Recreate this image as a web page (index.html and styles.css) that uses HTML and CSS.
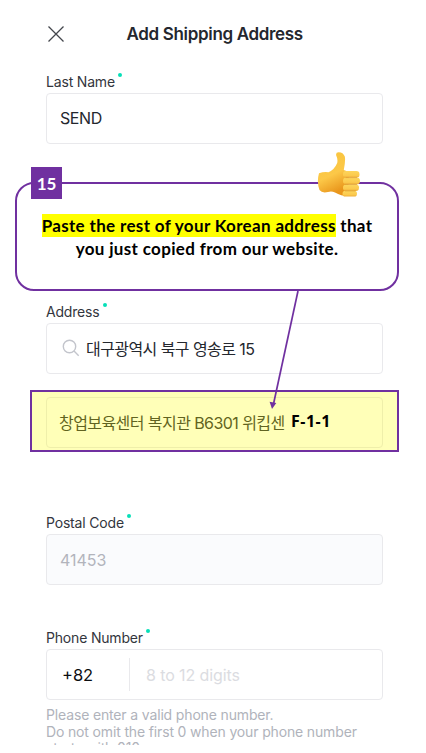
FILE: index.html
```
<!DOCTYPE html>
<html lang="en">
<head>
    <title>Add Shipping Address</title>
    <meta charset="utf-8">
    <meta name="viewport" content="width=device-width, initial-scale=1.0">
    <link rel="stylesheet" href="styles.css">
</head>
<body>
    <div class="screen">
        <div class="header">
            <svg class="close" width="18" height="18" viewBox="0 0 18 18">
                <path d="M1.5 1.5L16.5 16.5M16.5 1.5L1.5 16.5"/>
            </svg>
            <h1>Add Shipping Address</h1>
        </div>

        <div class="field name-field">
            <div class="label">Last Name<i class="dot"></i></div>
            <div class="input name">SEND</div>
        </div>

        <div class="field address-field">
            <div class="label">Address<i class="dot"></i></div>
            <div class="input search">
                <svg width="18" height="18" viewBox="0 0 18 18">
                    <circle cx="7.5" cy="7.5" r="6.2"/>
                    <path d="M12 12L16.7 16.7"/>
                </svg>
                <span class="korean">대구광역시 북구 영송로 15</span>
            </div>
            <div class="input detail">
                <span class="korean">창업보육센터 복지관 B6301 위킵센</span>
            </div>
        </div>

        <div class="field postal-field">
            <div class="label">Postal Code<i class="dot"></i></div>
            <div class="input disabled">41453</div>
        </div>

        <div class="field phone-field">
            <div class="label">Phone Number<i class="dot"></i></div>
            <div class="input phone">
                <span class="prefix">+82</span>
                <span class="placeholder">8 to 12 digits</span>
            </div>
            <p class="hint">Please enter a valid phone number.<br>Do not omit the first 0 when your phone number<br>starts with 010.</p>
        </div>
    </div>

    <!-- tutorial overlay -->
    <div class="callout">
        <p><mark>Paste the rest of your Korean address</mark> that</p>
        <p>you just copied from our website.</p>
    </div>
    <div class="step">15</div>
    <div class="highlight"></div>
    <div class="unit">F-1-1</div>
    <svg class="arrow" width="40" height="122" viewBox="0 0 40 122">
        <path class="line" d="M33 1L8.5 114"/>
        <path class="tip" d="M4.6 111.8L11.3 113L7 119Z"/>
    </svg>
    <svg class="thumb" width="44" height="48" viewBox="0 0 44 48">
        <defs>
            <linearGradient id="skin" x1="0" y1="0" x2="0.35" y2="1">
                <stop offset="0" stop-color="#f8c43c"/>
                <stop offset="0.6" stop-color="#fcc848"/>
                <stop offset="1" stop-color="#e9961c"/>
            </linearGradient>
            <linearGradient id="finger" x1="0" y1="0" x2="0" y2="1">
                <stop offset="0" stop-color="#fdd65c"/>
                <stop offset="0.7" stop-color="#fbc94d"/>
                <stop offset="1" stop-color="#eeac36"/>
            </linearGradient>
        </defs>
        <path fill="url(#skin)" d="M2 22.300Q7 20.500 11.500 21.300Q17.500 18.500 20.200 12Q21 8 19.200 4.500Q18.600 1.300 21.500 1.200Q26 1 27.800 5.500Q28.700 9 26.800 19L32 21L31 45Q24 45 18 41.500Q14.500 39.800 11 41Q5 42.500 2.500 39Q-.5 31 2 22.300Z"/>
        <rect fill="url(#finger)" x="26" y="20" width="16.500" height="6.600" rx="3.200"/>
        <rect fill="url(#finger)" x="26" y="26.600" width="17" height="6.800" rx="3.400"/>
        <rect fill="url(#finger)" x="26" y="33.400" width="16" height="6.500" rx="3.200"/>
        <rect fill="url(#finger)" x="25.500" y="39.800" width="14.500" height="5.800" rx="2.900"/>
        <path class="crease" d="M28.500 26.600H40M28 33.400H40M28 39.900H38.500"/>
    </svg>
</body>
</html>
```

FILE: styles.css
```
* {
    box-sizing: border-box;
}
body {
    position: relative;
    margin: 0;
    height: 753px;
    overflow: hidden;
    background: white;
    font-family: Inter, 'Noto Sans CJK KR', sans-serif;
    color: #24272e;
}
.screen {
    height: 745px;
    padding: 0 43px 0 46px;
    overflow: hidden;
}
.header {
    display: flex;
    align-items: center;
    height: 68px;
    padding-left: 1px;
}
.header h1 {
    margin: 0 0 0 61.500px;
    font-size: 17px;
    font-weight: 600;
    letter-spacing: -0.33px;
    white-space: nowrap;
}
.close {
    stroke: #43464c;
    stroke-width: 1.3;
    fill: none;
}
.name-field {
    margin-top: 3px;
}
.address-field {
    margin-top: 157px;
}
.postal-field {
    margin-top: 64px;
}
.phone-field {
    margin-top: 42px;
}
.label {
    display: flex;
    height: 22px;
    line-height: 21px;
    font-size: 14px;
    letter-spacing: -0.18px;
    color: #33363d;
}
.dot {
    width: 4px;
    height: 4px;
    margin: 2px 0 0 3px;
    border-radius: 50%;
    background: #06dfb8;
}
.input {
    display: flex;
    align-items: center;
    height: 51px;
    padding-left: 13px;
    border: 1px solid #e9e9ec;
    border-radius: 4px;
    font-size: 16px;
    white-space: nowrap;
}
.name {
    padding-bottom: 2px;
    letter-spacing: -0.4px;
}
.search {
    padding-bottom: 2px;
}
.search svg {
    margin: 0 6px 0 2px;
    fill: none;
    stroke: #c3c5cc;
    stroke-width: 1.4;
}
.korean {
    letter-spacing: -0.57px;
}
.detail {
    margin-top: 23px;
    padding-left: 12px;
    padding-bottom: 2px;
}
.disabled {
    background: #fafbfd;
    color: #b2b4bc;
}
.phone {
    padding-left: 15px;
}
.prefix {
    width: 68px;
    height: 33px;
    line-height: 35px;
    border-right: 1px solid #e9e9ec;
    font-size: 16.500px;
    color: #0c0d10;
}
.placeholder {
    margin-left: 16px;
    letter-spacing: -0.1px;
    color: #dbdce1;
}
.hint {
    margin: 7px 0 0;
    font-size: 14px;
    line-height: 16.500px;
    letter-spacing: -0.15px;
    color: #b0b3bb;
    white-space: nowrap;
}
.callout {
    position: absolute;
    left: 15px;
    top: 182px;
    width: 384px;
    height: 109px;
    padding-top: 30px;
    border: 2px solid #7030a0;
    border-radius: 19px;
    background: white;
    font-family: Lato, sans-serif;
    font-size: 17px;
    font-weight: 700;
    line-height: 23px;
    letter-spacing: 0.34px;
    text-align: center;
    color: black;
    white-space: nowrap;
}
.callout p {
    margin: 0;
}
.callout mark {
    display: inline-block;
    background: #ffff00;
    color: black;
}
.step {
    position: absolute;
    left: 31px;
    top: 167px;
    width: 31px;
    height: 32px;
    background: #7030a0;
    color: white;
    font-family: Lato, sans-serif;
    font-size: 17px;
    font-weight: 700;
    line-height: 34px;
    text-align: center;
}
.highlight {
    position: absolute;
    left: 30px;
    top: 390px;
    width: 369px;
    height: 62px;
    border: 2px solid #7030a0;
    background: rgba(255, 255, 0, 0.28);
}
.unit {
    position: absolute;
    left: 291px;
    top: 410px;
    font-family: 'Noto Sans', sans-serif;
    font-size: 16px;
    font-weight: 700;
    line-height: 22px;
    letter-spacing: 0.5px;
    color: black;
}
.arrow {
    position: absolute;
    left: 265px;
    top: 290px;
}
.arrow .line {
    stroke: #7030a0;
    stroke-width: 1.7;
}
.arrow .tip {
    fill: #7030a0;
}
.thumb {
    position: absolute;
    left: 317px;
    top: 151px;
}
.crease {
    fill: none;
    stroke: #dc9a30;
    stroke-width: 0.7;
}
```
